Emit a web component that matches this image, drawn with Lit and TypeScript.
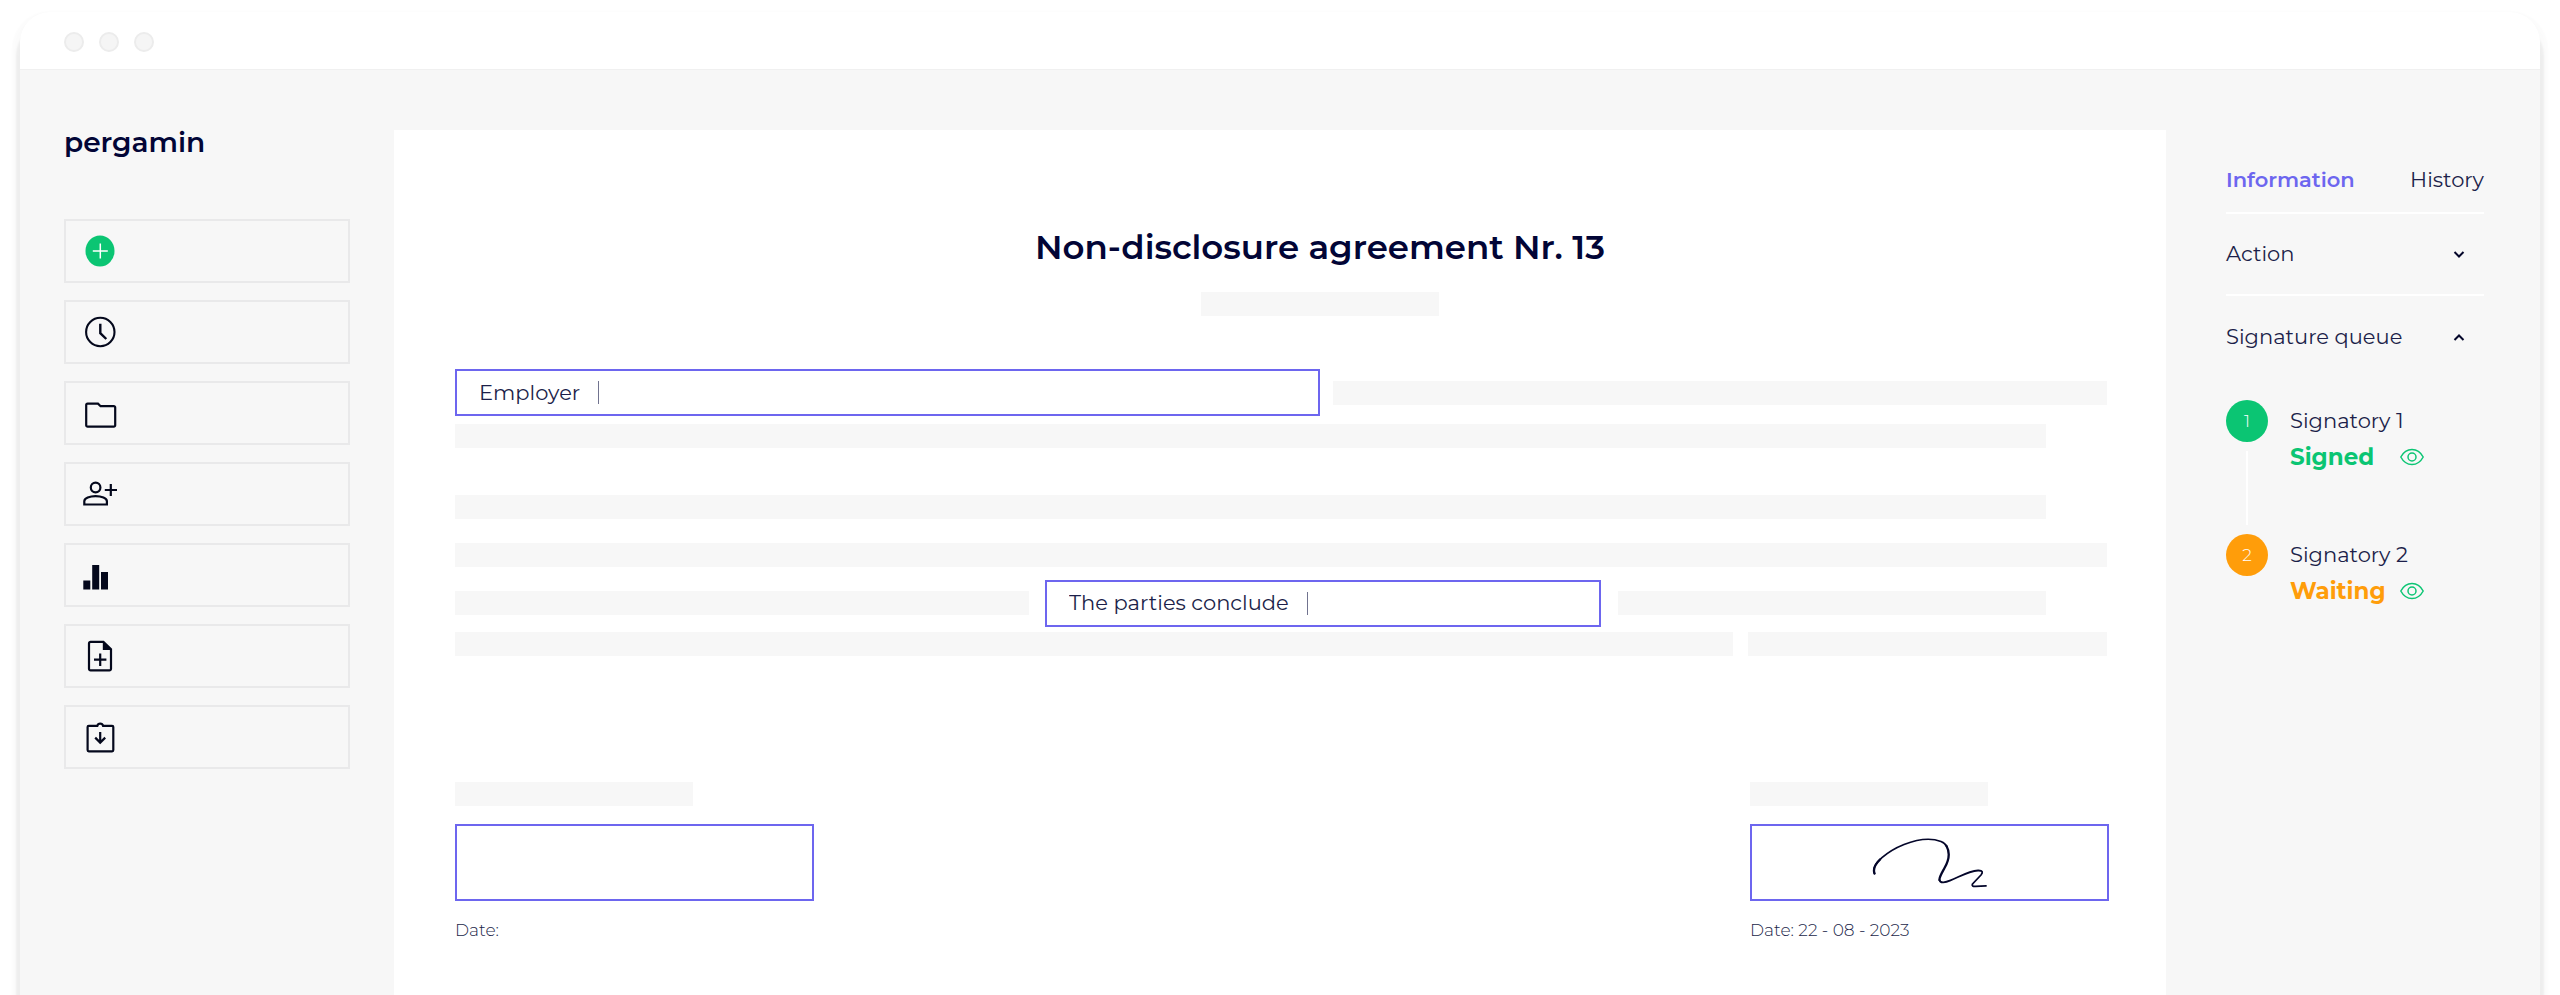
import { LitElement, html, css, svg } from "lit";
import { customElement } from "lit/decorators.js";
import { styleMap } from "lit/directives/style-map.js";

type Segment = { kind: "bar" | "gap" | "field"; weight: number; label?: string; value?: string };

const bar = (weight: number): Segment => ({ kind: "bar", weight });
const gap = (weight: number): Segment => ({ kind: "gap", weight });
const field = (weight: number, label: string, value: string): Segment => ({ kind: "field", weight, label, value });

const paragraphs: Segment[][][] = [
  [
    [field(865, "Party", "Employer"), gap(13), bar(774), gap(2)],
    [bar(1591), gap(63)],
  ],
  [
    [bar(1591), gap(63)],
    [bar(1652), gap(2)],
    [bar(574), gap(16), field(556, "Statement", "The parties conclude"), gap(17), bar(428), gap(63)],
    [bar(1278), gap(15), bar(359), gap(2)],
  ],
];

const navItems = [
  {
    name: "New",
    icon: svg`<ellipse cx="18" cy="18" rx="14.5" ry="15.5" fill="#0bc573"/><path d="M18.300 10.500v15M10.800 18h15" stroke="#fff" stroke-width="1.500"/>`,
  },
  {
    name: "Recent",
    icon: svg`<circle cx="18.3" cy="18" r="14.2" fill="none" stroke="currentColor" stroke-width="2.100"/><path d="M18.3 9.8v9.4l6 5.8" fill="none" stroke="currentColor" stroke-width="2.4"/>`,
  },
  {
    name: "Folders",
    icon: svg`<path d="M5.800 8.600H16l2.600 2.600h13.200a1.400 1.400 0 0 1 1.400 1.400v17.600a1.400 1.400 0 0 1-1.400 1.400H5.600a1.400 1.400 0 0 1-1.400-1.400V10a1.400 1.400 0 0 1 1.400-1.400Z" fill="none" stroke="currentColor" stroke-width="2.2"/>`,
  },
  {
    name: "Add person",
    icon: svg`<g fill="none" stroke="currentColor" stroke-width="2.200"><circle cx="13.600" cy="11.500" r="4.800"/><path d="M2.300 28.500v-3.300c0-2.900 5.400-5 11.300-5s11.300 2.100 11.300 5v3.300Z"/><path d="M28.800 8v12M22.800 14h12.200"/></g>`,
  },
  {
    name: "Reports",
    icon: svg`<path d="M1.300 23.500h7v9h-7ZM10.200 8h7v24.500h-7ZM19 15h7v17.500h-7Z" fill="currentColor"/>`,
  },
  {
    name: "New file",
    icon: svg`<path d="M8.600 3.800h12.800l7.600 7.400v19.600a1.600 1.600 0 0 1-1.600 1.600H8.600A1.600 1.600 0 0 1 7 30.800V5.400a1.600 1.600 0 0 1 1.600-1.600Z" fill="none" stroke="currentColor" stroke-width="2.200"/><path d="M20.800 3.200v8.800h8.800Z" fill="currentColor"/><path d="M18.200 15.500v12.400M12 21.700h12.400" stroke="currentColor" stroke-width="2.200"/>`,
  },
  {
    name: "Import",
    icon: svg`<g fill="none" stroke="currentColor" stroke-width="2.200"><path d="M15.300 6.900a3 3 0 0 1 5.800 0h9a1.200 1.200 0 0 1 1.200 1.200v23a1.200 1.200 0 0 1-1.200 1.200H6.800a1.200 1.200 0 0 1-1.200-1.200v-23a1.200 1.200 0 0 1 1.200-1.200Z"/><path d="M18.200 13v10.500M13.200 18.600l5 5 5-5"/></g>`,
  },
];

const signatories = [
  { order: 1, name: "Signatory 1", status: "Signed", tone: "done" },
  { order: 2, name: "Signatory 2", status: "Waiting", tone: "pending" },
];

@customElement("side-nav")
class SideNav extends LitElement {
  static styles = css`
    :host { display: block; padding: 50px 44px 0; }
    .logo {
      display: block; margin-bottom: 55px; font-size: 28px; line-height: 44px; font-weight: 600;
      color: #020536; text-decoration: none;
    }
    .list { display: flex; flex-direction: column; gap: 17px; margin: 0; padding: 0; list-style: none; }
    .item {
      display: flex; align-items: center; box-sizing: border-box; width: 100%; height: 64px;
      padding: 0 16px; border: 2px solid #e9e9ea; background: none; color: #04081c; cursor: pointer;
    }
    .icon { width: 36px; height: 36px; }
  `;

  render() {
    return html`
      <a class="logo" href="#">pergamin</a>
      <nav>
        <ul class="list">
          ${navItems.map(
            (item) => html`<li>
              <button class="item" type="button" aria-label=${item.name}>
                <svg class="icon" viewBox="0 0 36 36" aria-hidden="true">${item.icon}</svg>
              </button>
            </li>`
          )}
        </ul>
      </nav>
    `;
  }
}

@customElement("contract-page")
class ContractPage extends LitElement {
  static styles = css`
    :host { display: block; padding: 92px 57px 40px 61px; background: #fff; color: #020536; }
    .heading { display: flex; flex-direction: column; align-items: center; gap: 20px; padding-left: 76px; }
    .title { margin: 0; font-size: 34px; line-height: 50px; font-weight: 600; }
    .bar { height: 24px; background: #f7f7f7; }
    .short { width: 238px; }
    .text { display: flex; flex-direction: column; gap: 47px; margin-top: 53px; }
    .opening { display: grid; gap: 8px; }
    .terms { display: grid; gap: 24px; }
    .row { display: flex; align-items: center; height: 24px; }
    .opening .row:first-child { height: 47px; }
    .terms .row:last-child { margin-top: -7px; }
    .seg { flex: 1 1 0; min-width: 0; }
    .field {
      display: flex; align-items: center; gap: 18px; box-sizing: border-box; height: 47px;
      padding: 0 22px; border: 2px solid #6d66ef; background: #fff;
    }
    .input {
      field-sizing: content; min-width: 0; padding: 0; border: 0; outline: 0; background: none;
      font: inherit; font-size: 21px; line-height: 28px; color: #1c1f4a;
    }
    .caret { width: 1px; height: 23px; background: #71738f; }
    .signatures { display: flex; justify-content: space-between; margin-top: 126px; }
    .party { display: flex; flex-direction: column; width: 359px; }
    .box {
      display: flex; align-items: center; justify-content: center; box-sizing: border-box;
      height: 77px; margin: 18px 0 17px; border: 2px solid #6d66ef;
    }
    .ink { width: 116px; height: 50px; }
    .date { margin: 0; font-size: 17px; line-height: 24px; font-weight: 300; color: #1c1f4a; }
  `;

  renderSegment(seg: Segment) {
    const grow = styleMap({ flexGrow: String(seg.weight) });
    if (seg.kind === "field") {
      return html`<div class="seg" style=${grow}>
        <label class="field">
          <input class="input" type="text" aria-label=${seg.label} .value=${seg.value ?? ""} />
          <span class="caret"></span>
        </label>
      </div>`;
    }
    return html`<div class="seg ${seg.kind}" style=${grow}></div>`;
  }

  render() {
    return html`
      <header class="heading">
        <h1 class="title">Non-disclosure agreement Nr. 13</h1>
        <div class="bar short"></div>
      </header>
      <div class="text">
        ${paragraphs.map(
          (rows, i) => html`<section class=${i === 0 ? "opening" : "terms"}>
            ${rows.map((row) => html`<div class="row">${row.map((seg) => this.renderSegment(seg))}</div>`)}
          </section>`
        )}
      </div>
      <div class="signatures">
        <div class="party">
          <div class="bar short"></div>
          <div class="box"></div>
          <p class="date">Date:</p>
        </div>
        <div class="party">
          <div class="bar short"></div>
          <div class="box">
            <svg class="ink" viewBox="0 0 116 50" role="img" aria-label="Signature">
              <g fill="none" stroke="#04062a" stroke-linecap="round" stroke-linejoin="round">
                <path d="M2.500 35.500C-2 26 17 12.500 32 6.500C46 1 60 0 69 3.500C72 4.700 74 6.500 75 9" stroke-width="1.700"/>
                <path d="M2.500 35.500C.8 31 3 26.500 8 21.500M74.500 8C79 16 76 24 72.500 30C69.500 35.500 67 39.500 67.500 42" stroke-width="2.300"/>
                <path d="M67.500 42c.5 3.500 6 2.500 11 .4C88 38.500 97 33 106 32.500c5-.2 5 2 3 4.500l-8.500 9c-1 2 .5 2.500 3 2.400l10.500-.6" stroke-width="1.800"/>
              </g>
            </svg>
          </div>
          <p class="date">Date: 22 - 08 - 2023</p>
        </div>
      </div>
    `;
  }
}

@customElement("info-panel")
class InfoPanel extends LitElement {
  static styles = css`
    :host { display: block; padding: 95px 56px 0 60px; color: #1c1f4a; font-size: 21px; line-height: 30px; }
    button { padding: 0; border: 0; background: none; font: inherit; color: inherit; cursor: pointer; }
    .tabs { display: flex; justify-content: space-between; padding-bottom: 17px; border-bottom: 2px solid #fff; }
    .active { font-weight: 600; color: #6d66ef; }
    .section {
      display: flex; align-items: center; justify-content: space-between; box-sizing: border-box;
      width: 100%; height: 82px; padding-right: 18px;
    }
    .divided { border-bottom: 2px solid #fff; }
    .chevron { width: 14px; height: 14px; }
    .queue { display: flex; flex-direction: column; margin: 0; padding: 22px 0 0; list-style: none; }
    .signatory { display: grid; grid-template-columns: 42px 1fr; column-gap: 22px; min-height: 134px; }
    .track { display: flex; flex-direction: column; align-items: center; gap: 9px; }
    .badge {
      display: flex; align-items: center; justify-content: center; width: 42px; height: 42px;
      border-radius: 50%; font-size: 17px; line-height: 20px; font-weight: 300; color: #fff;
    }
    .line { width: 2px; height: 74px; background: #fff; }
    .name { margin: 0; padding-top: 6px; }
    .state { display: grid; grid-template-columns: 110px auto; justify-content: start; align-items: center; margin-top: 6px; }
    .status { font-size: 23px; font-weight: 700; }
    .eye { display: block; width: 24px; height: 18px; color: #0bc573; }
    .done .badge { background: #0bc573; }
    .done .status { color: #0bc573; }
    .pending .badge { background: #ff9d0a; }
    .pending .status { color: #ff9d0a; }
  `;

  chevron(d: string) {
    return html`<svg class="chevron" viewBox="0 0 14 14" aria-hidden="true">
      <path d=${d} fill="none" stroke="#04062a" stroke-width="2" />
    </svg>`;
  }

  render() {
    return html`
      <div class="tabs" role="tablist">
        <button class="active" type="button" role="tab" aria-selected="true">Information</button>
        <button type="button" role="tab" aria-selected="false">History</button>
      </div>
      <button class="section divided" type="button" aria-expanded="false">
        Action ${this.chevron("M2.500 5l4.500 4.500L11.500 5")}
      </button>
      <button class="section" type="button" aria-expanded="true">
        Signature queue ${this.chevron("M2.500 10L7 5.500l4.500 4.500")}
      </button>
      <ol class="queue">
        ${signatories.map(
          (s, i) => html`<li class="signatory ${s.tone}">
            <div class="track">
              <span class="badge">${s.order}</span>
              ${i < signatories.length - 1 ? html`<span class="line"></span>` : ""}
            </div>
            <div>
              <p class="name">${s.name}</p>
              <div class="state">
                <span class="status">${s.status}</span>
                <button type="button" aria-label="Preview ${s.name}">
                  <svg class="eye" viewBox="0 0 24 18" aria-hidden="true">
                    <g fill="none" stroke="currentColor" stroke-width="1.500">
                      <path d="M.8 9C3.500 4 7.500 1.500 12 1.500S20.500 4 23.200 9C20.500 14 16.500 16.500 12 16.500S3.500 14 .8 9Z"/>
                      <circle cx="12" cy="9" r="4"/>
                    </g>
                  </svg>
                </button>
              </div>
            </div>
          </li>`
        )}
      </ol>
    `;
  }
}

@customElement("app-root")
class AppRoot extends LitElement {
  static styles = css`
    :host {
      display: flex; flex-direction: column; box-sizing: border-box; min-height: 100vh;
      padding: 12px 20px 0; background: #fff; overflow: hidden;
      font-family: Montserrat, Inter, "Open Sans", sans-serif;
    }
    .window {
      display: flex; flex-direction: column; flex: 1; border-radius: 30px 30px 0 0;
      background: #f7f7f7;
      box-shadow: 0 14px 2px 4px rgba(0, 0, 0, 0.05), 0 7px 2px 8px rgba(0, 0, 0, 0.015);
    }
    .titlebar {
      display: flex; align-items: center; gap: 15px; height: 57px; padding: 3px 44px 0;
      box-sizing: border-box; border-radius: 30px 30px 0 0; background: #fff;
    }
    .dot { box-sizing: border-box; width: 20px; height: 20px; border: 2px solid #ececec; border-radius: 50%; background: #f5f5f5; }
    .body {
      display: grid; grid-template-columns: 374px minmax(0, 1fr) 374px; flex: 1;
      border-top: 1px solid #f0f0f0;
    }
    .paper { margin-top: 60px; }
  `;

  render() {
    return html`
      <div class="window">
        <div class="titlebar"><span class="dot"></span><span class="dot"></span><span class="dot"></span></div>
        <div class="body">
          <side-nav></side-nav>
          <contract-page class="paper"></contract-page>
          <info-panel></info-panel>
        </div>
      </div>
    `;
  }
}
